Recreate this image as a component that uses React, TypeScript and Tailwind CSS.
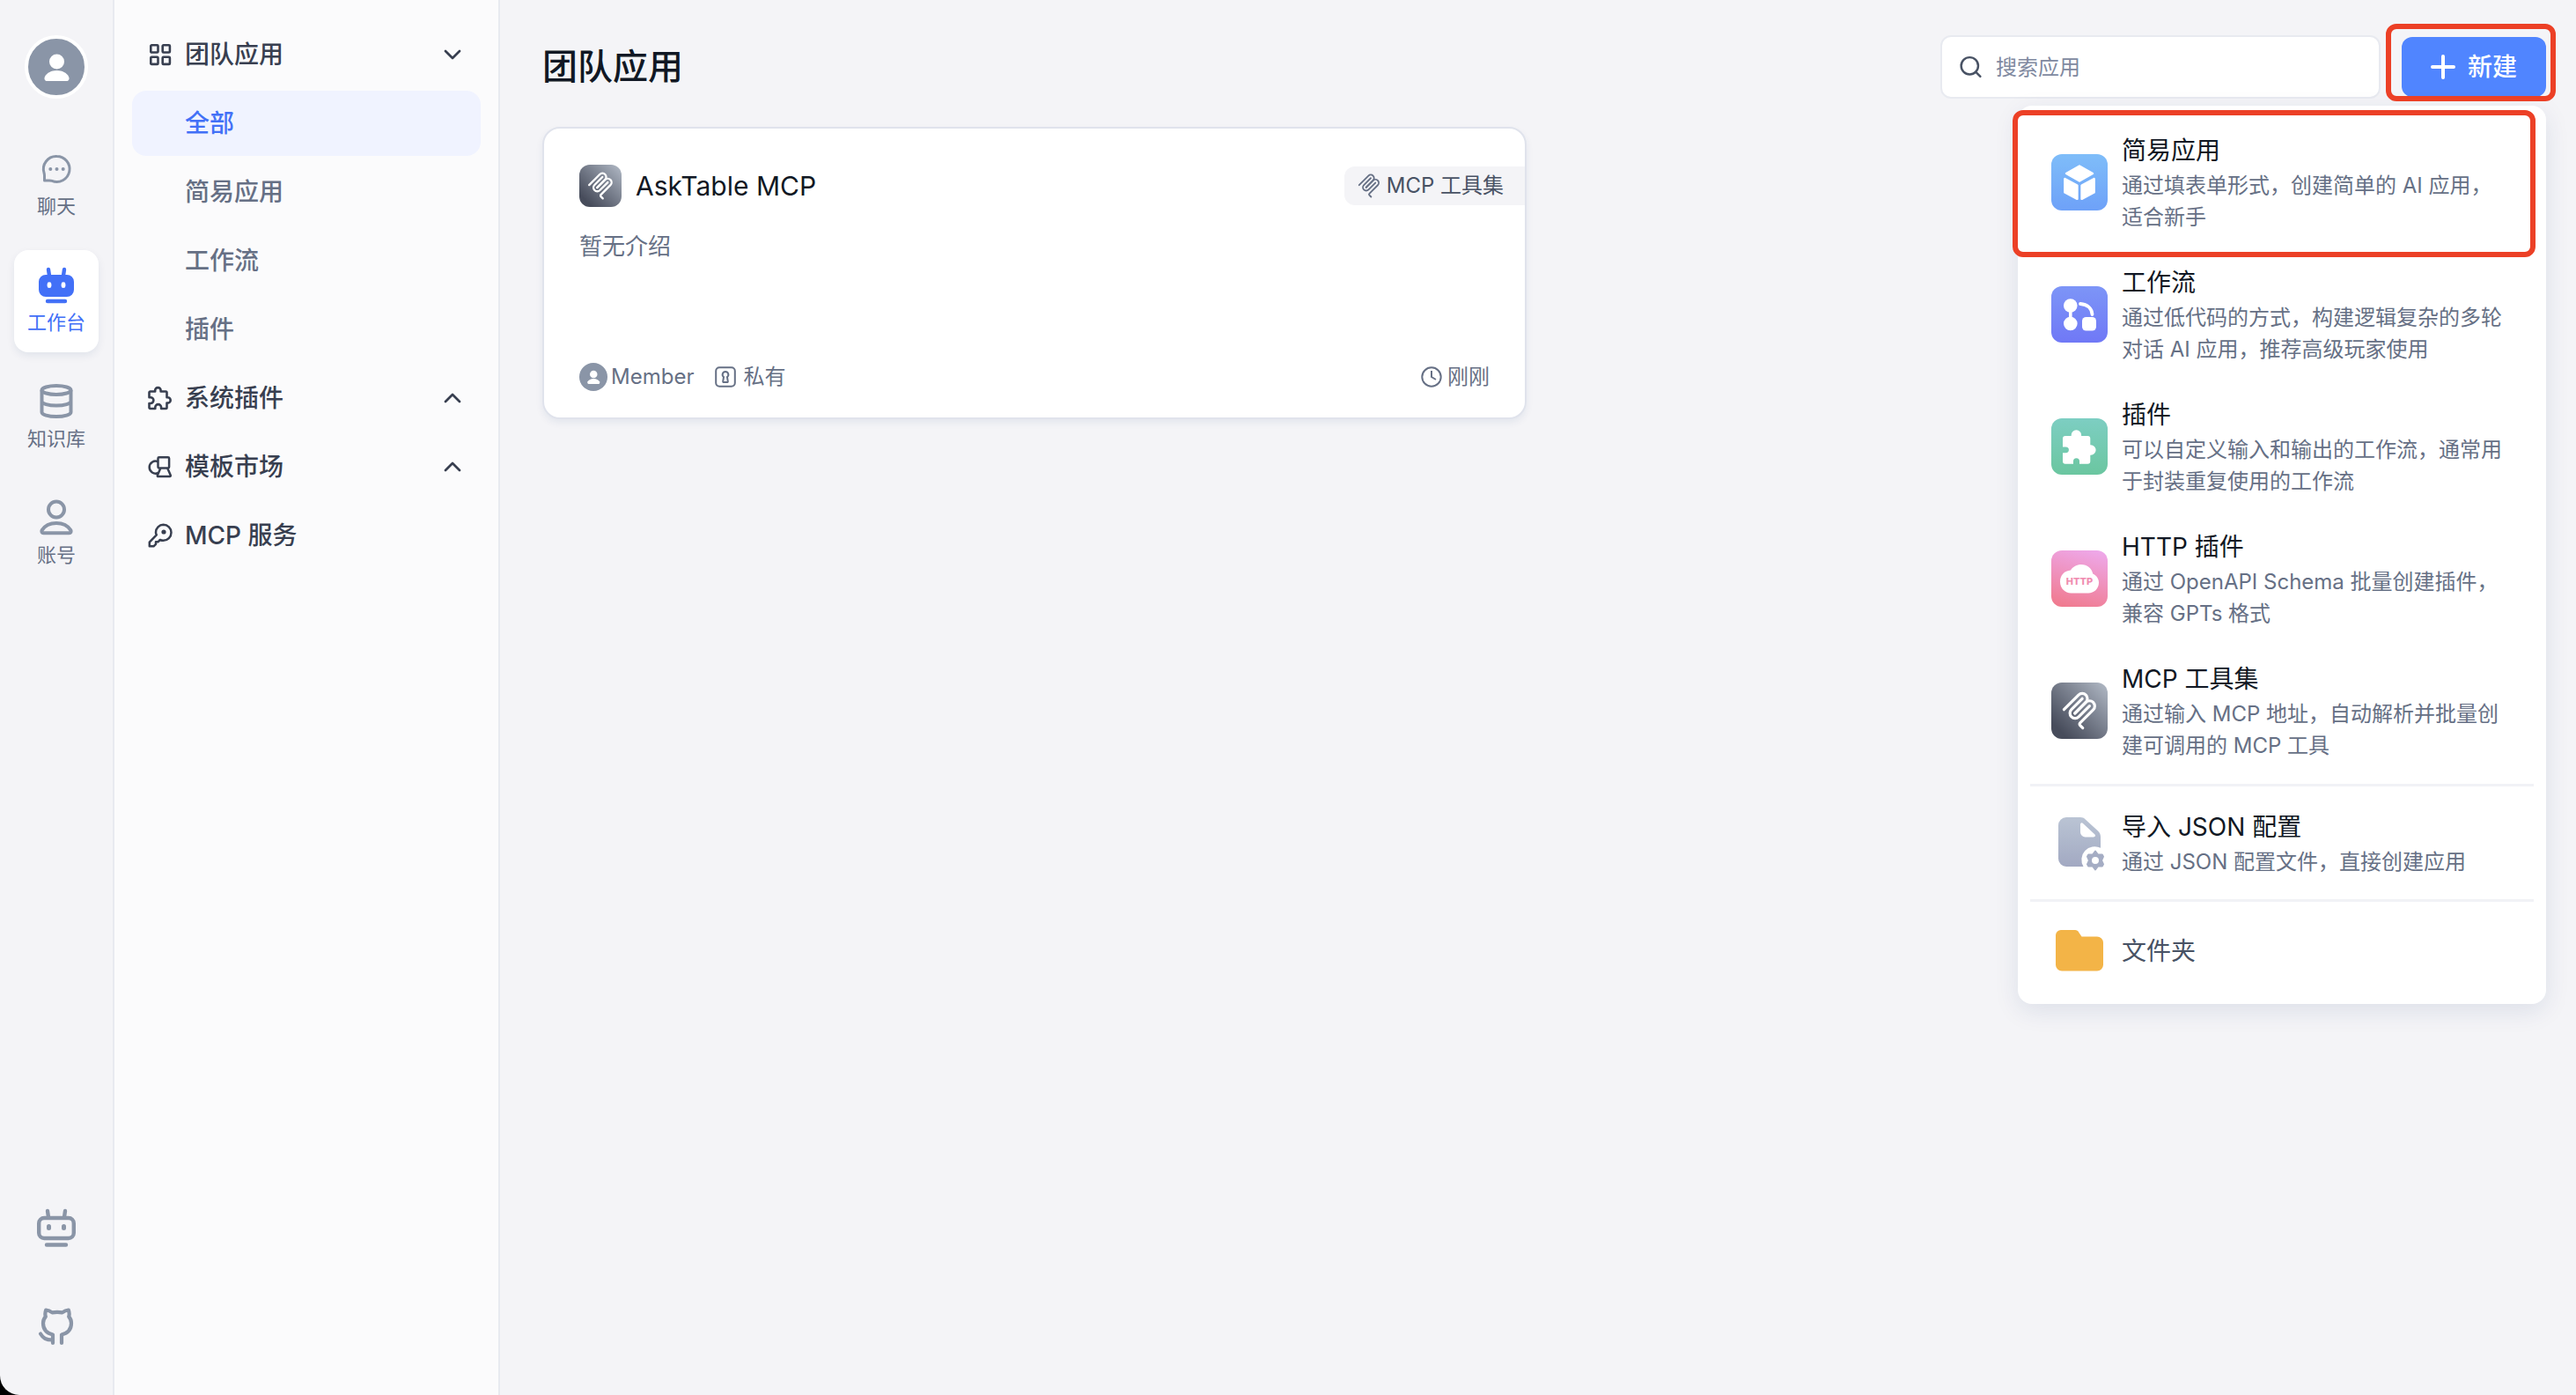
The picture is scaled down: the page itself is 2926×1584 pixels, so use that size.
import React from 'react';
import { ChevronDown, ChevronUp, Search } from 'lucide-react';

type IconProps = { className?: string };

const McpIcon = ({ className, width = 12 }: IconProps & { width?: number }) => (
  <svg viewBox="0 0 180 180" className={className} fill="none" stroke="currentColor" strokeWidth={width} strokeLinecap="round">
    <path d="M18 84.85L85.88 16.97C95.25 7.6 110.45 7.6 119.82 16.97C129.2 26.34 129.2 41.54 119.82 50.91L68.56 102.18" />
    <path d="M69.27 101.47L119.82 50.91C129.2 41.54 144.39 41.54 153.77 50.91L154.12 51.27C163.49 60.64 163.49 75.83 154.12 85.21L92.72 146.6C89.6 149.72 89.6 154.79 92.72 157.91L105.33 170.52" />
    <path d="M102.85 33.94L52.65 84.15C43.28 93.52 43.28 108.71 52.65 118.09C62.02 127.46 77.22 127.46 86.59 118.09L136.79 67.88" />
  </svg>
);

const ChatIcon = () => (
  <svg viewBox="0 0 48 48" className="size-12" fill="none" stroke="currentColor" strokeWidth="3" strokeLinejoin="round">
    <path d="M24.500 9.500a14.500 14.500 0 1 1-5.500 27.900c-1-.4-2-.4-3-.4h-5.500v-5.500c0-1-.1-2-.4-3A14.500 14.500 0 0 1 24.500 9.500z" />
    <g fill="currentColor" stroke="none">
      <circle cx="17.300" cy="24" r="2" />
      <circle cx="24.500" cy="24" r="2" />
      <circle cx="31.700" cy="24" r="2" />
    </g>
  </svg>
);

const BotFilledIcon = () => (
  <svg viewBox="0 0 48 48" className="size-12">
    <path d="M15 6l1 7M33 6l-1 7M14 42h20" stroke="currentColor" strokeWidth="4.400" strokeLinecap="round" />
    <path fill="currentColor" fillRule="evenodd" d="M12 12h24a8 8 0 0 1 8 8v9a8 8 0 0 1-8 8H12a8 8 0 0 1-8-8v-9a8 8 0 0 1 8-8zm4 8.300a2.400 2.400 0 0 0-2.400 2.400v2a2.400 2.400 0 0 0 4.800 0v-2a2.400 2.400 0 0 0-2.400-2.400zm16 0a2.400 2.400 0 0 0-2.400 2.400v2a2.400 2.400 0 0 0 4.800 0v-2a2.400 2.400 0 0 0-2.400-2.400z" />
  </svg>
);

const BotIcon = () => (
  <svg viewBox="0 0 44 44" className="size-11" fill="none" stroke="currentColor" strokeWidth="4.400" strokeLinecap="round">
    <rect x="2.200" y="11" width="39.600" height="23" rx="6" />
    <path d="M12 3l1 7M32 3l-1 7M11 41.500h22" />
    <path d="M13.500 20.500v2M30.500 20.500v2" strokeWidth="5" />
  </svg>
);

const DatabaseIcon = () => (
  <svg viewBox="0 0 48 48" className="size-12" fill="none" stroke="currentColor" strokeWidth="4">
    <ellipse cx="24" cy="11" rx="16.500" ry="5" />
    <path d="M7.500 11v25c0 2.800 7.400 5 16.500 5s16.500-2.200 16.500-5V11M7.500 23.500c0 2.800 7.400 5 16.500 5s16.500-2.200 16.500-5" />
  </svg>
);

const UserIcon = () => (
  <svg viewBox="0 0 48 48" className="size-12" fill="none" stroke="currentColor" strokeWidth="4" strokeLinejoin="round">
    <circle cx="24" cy="14.500" r="9" />
    <path d="M24 30c7.500 0 13.500 3.500 16.400 8.100.8 1.600 0 3.100-1.800 3.100H9.400c-1.800 0-2.600-1.500-1.800-3.100C10.500 33.500 16.500 30 24 30z" />
  </svg>
);

const GithubIcon = () => (
  <svg viewBox="0 0 44 44" className="size-11" fill="none" stroke="currentColor" strokeWidth="4.200" strokeLinecap="round" strokeLinejoin="round">
    <path d="M18 41V31.500c-6-1.500-11-5.500-11-13 0-3.500 1-5.500 2.800-7.500-.8-2.500-.5-5 .4-7.500 2.800.3 5 1.400 7.100 2.900 4-.8 7.400-.8 11.400 0 2.100-1.500 4.300-2.600 7.100-2.900.9 2.500 1.200 5 .4 7.500 1.800 2 2.800 4 2.800 7.500 0 7.500-5 11.500-11 13V41" />
    <path d="M4 30.500c3 5 6 7 13.500 7" />
  </svg>
);

const PersonIcon = ({ className }: IconProps) => (
  <svg viewBox="0 0 64 64" className={className} fill="currentColor">
    <circle cx="32.500" cy="26" r="8.500" />
    <path d="M32.500 36c6.500 0 11 2.800 13.400 6.700 1.300 2.400.5 5.300-2.200 5.300H21.300c-2.700 0-3.500-2.900-2.200-5.300C21.500 38.800 26 36 32.500 36z" />
  </svg>
);

const GridIcon = () => (
  <svg viewBox="0 0 28 28" className="size-7" fill="none" stroke="currentColor" strokeWidth="2.600">
    <rect x="3.300" y="3.300" width="8.200" height="8.200" rx="1" />
    <rect x="16.700" y="3.300" width="8.200" height="8.200" rx="1" />
    <rect x="3.300" y="16.700" width="8.200" height="8.200" rx="1" />
    <rect x="16.700" y="16.700" width="8.200" height="8.200" rx="1" />
  </svg>
);

const PuzzleIcon = () => (
  <svg viewBox="0 0 28 28" className="size-7" fill="none" stroke="currentColor" strokeWidth="2.600" strokeLinejoin="round">
    <path d="M8.200 6.500V5.300a3.200 3.200 0 0 1 6.400 0v1.200h5.700a1.200 1.200 0 0 1 1.200 1.200v5.500h1a3.200 3.200 0 0 1 0 6.400h-1v5.200a1.200 1.200 0 0 1-1.200 1.200h-5.200v-1.500a3.400 3.400 0 0 0-6.800 0v1.500H2.700a1.200 1.200 0 0 1-1.200-1.200V20h1.500a3.400 3.400 0 0 0 0-6.800H1.500V7.700a1.200 1.200 0 0 1 1.200-1.200z" />
  </svg>
);

const MarketIcon = () => (
  <svg viewBox="0 0 28 28" className="size-7" fill="none" stroke="currentColor" strokeWidth="2.500" strokeLinejoin="round">
    <rect x="11.500" y="3.200" width="12.600" height="12.300" rx="1.200" />
    <path d="M11.500 8.200a7 7 0 1 0 0 12.800M14.300 15.700l-3.400 7.800c-.4 1 .1 1.500 1 1.500h12.800c1 0 1.400-.6 1-1.500l-3.400-7.800" />
  </svg>
);

const KeyIcon = () => (
  <svg viewBox="0 0 28 28" className="size-7" fill="none" stroke="currentColor" strokeWidth="2.500" strokeLinejoin="round">
    <path d="M17.500 1.800a9 9 0 0 1 0 18c-1.300 0-2.600-.3-3.700-.8l-2.300 2.300H9v2.500L6.500 26.300H1.800v-4.600l8-8.300c-.5-1-.8-1.800-.8-3a8.800 8.800 0 0 1 8.500-8.600z" />
    <circle cx="18" cy="10" r="2.600" fill="currentColor" stroke="none" />
  </svg>
);

const LockIcon = () => (
  <svg viewBox="0 0 24 24" className="size-6" fill="none" stroke="currentColor" strokeWidth="2">
    <rect x="1.200" y="1.200" width="21.600" height="21.600" rx="4" />
    <path d="M12 6a3.400 3.400 0 0 1 2 6.100l.8 5c.1.500-.3.900-.8.900h-4c-.5 0-.9-.4-.8-.9l.8-5A3.400 3.400 0 0 1 12 6z" />
  </svg>
);

const ClockIcon = () => (
  <svg viewBox="0 0 24 24" className="size-6" fill="none" stroke="currentColor" strokeWidth="2">
    <circle cx="12" cy="12" r="10.700" />
    <path d="M12 5v7l5 3" />
  </svg>
);

const SimpleAppIcon = () => (
  <svg viewBox="0 0 64 64" className="size-full" fill="white" stroke="white" strokeWidth="2.500" strokeLinejoin="round">
    <path d="M32 13.500L17 22l15 8.500L47 22z" />
    <path d="M15.400 28v15.500l14 7.300V35.500zM48.600 28v15.500l-14 7.300V35.500z" />
  </svg>
);

const WorkflowIcon = () => (
  <svg viewBox="0 0 64 64" className="size-full" fill="white">
    <circle cx="21.800" cy="22" r="7.800" />
    <circle cx="21.800" cy="42.500" r="7.800" />
    <rect x="35" y="35" width="16" height="15.500" rx="4.500" />
    <path d="M21.800 26v14" stroke="white" strokeWidth="3.600" />
    <path d="M33 20C41 20.500 46 25 46.500 32" fill="none" stroke="white" strokeWidth="3.800" strokeLinecap="round" />
  </svg>
);

const PluginIcon = () => (
  <svg viewBox="0 0 64 64" className="size-full" fill="white">
    <path d="M22.700 20v-1a5.700 5.700 0 0 1 11.400 0v1h7.200a3 3 0 0 1 3 3v7.300h.6a5.700 5.700 0 0 1 0 11.400h-.6v7a3 3 0 0 1-3 3H32v-3a3.500 3.500 0 0 0-7 0v3h-9a3 3 0 0 1-3-3v-9.500h3.500a3.400 3.400 0 0 0 0-6.800H13V23a3 3 0 0 1 3-3z" />
  </svg>
);

const HttpIcon = () => (
  <svg viewBox="0 0 64 64" className="size-full">
    <path fill="white" d="M22 22.500C24.500 18.500 29 16 34 16c7 0 12 4.500 13.200 10.500C51.300 28.500 54 32 54 36.500 54 43.500 48.500 48.500 42 48.500H22.500C15.500 48.500 10 43 10 35.500c0-7.500 5-12.500 12-13z" />
    <text x="32" y="39" textAnchor="middle" fontFamily="Inter, sans-serif" fontWeight="800" fontSize="11" fill="#f08bb0">HTTP</text>
  </svg>
);

const JsonIcon = () => (
  <svg viewBox="0 0 64 64" className="size-16">
    <defs>
      <linearGradient id="json-fill" x1="0" y1="0" x2="0" y2="1">
        <stop offset="0" stopColor="#bac4d4" />
        <stop offset="1" stopColor="#a2a9c2" />
      </linearGradient>
    </defs>
    <path fill="url(#json-fill)" d="M17 3h16c2.200 0 4.200.8 5.800 2.400l14.200 13.200c2 1.800 3 4.200 3 6.900V37.800A15 15 0 0 0 36.500 59H17a9 9 0 0 1-9-9V12a9 9 0 0 1 9-9z" />
    <path fill="white" d="M33 11.500c0-2 1.600-2.800 3-1.500l13.200 12.300c1.500 1.500.8 3.100-1.200 3.100H38.500A5.500 5.500 0 0 1 33 20z" />
    <path
      fill="#a5adc4"
      stroke="#a5adc4"
      strokeWidth="2"
      strokeLinejoin="round"
      fillRule="evenodd"
      d="M50 41.500l3 4 4.800.1 1.200 2.100-2 4.300 2 4.300-1.200 2.100-4.800.1-3 4-3-4-4.800-.1-1.200-2.100 2-4.300-2-4.300 1.200-2.100 4.800-.1zm0 5.500a5 5 0 1 0 0 10 5 5 0 0 0 0-10z"
    />
  </svg>
);

const FolderIcon = () => (
  <svg viewBox="0 0 64 64" className="size-16" fill="#f3b447">
    <path d="M11 8h16c2 0 3.500 1 4.300 2.800L34.500 15.500H52a7 7 0 0 1 7 7v25a7 7 0 0 1-7 7H12a7 7 0 0 1-7-7V14a6 6 0 0 1 6-6z" />
  </svg>
);

const navItems = [
  { label: '聊天', icon: <ChatIcon /> },
  { label: '工作台', icon: <BotFilledIcon />, active: true },
  { label: '知识库', icon: <DatabaseIcon /> },
  { label: '账号', icon: <UserIcon /> },
];

const createItems = [
  {
    title: '简易应用',
    desc: '通过填表单形式，创建简单的 AI 应用，适合新手',
    icon: <SimpleAppIcon />,
    bg: 'bg-linear-to-b from-[#7fbdf9] to-[#6ea1f8]',
  },
  {
    title: '工作流',
    desc: '通过低代码的方式，构建逻辑复杂的多轮对话 AI 应用，推荐高级玩家使用',
    icon: <WorkflowIcon />,
    bg: 'bg-linear-to-b from-[#7d95f7] to-[#7078f6]',
  },
  {
    title: '插件',
    desc: '可以自定义输入和输出的工作流，通常用于封装重复使用的工作流',
    icon: <PluginIcon />,
    bg: 'bg-linear-to-b from-[#7dcec2] to-[#6bc6a0]',
  },
  {
    title: 'HTTP 插件',
    desc: '通过 OpenAPI Schema 批量创建插件，兼容 GPTs 格式',
    icon: <HttpIcon />,
    bg: 'bg-linear-[195deg] from-[#eeaaee] to-[#f0788a]',
  },
  {
    title: 'MCP 工具集',
    desc: '通过输入 MCP 地址，自动解析并批量创建可调用的 MCP 工具',
    icon: <McpIcon className="size-11 text-white" width={13} />,
    bg: 'bg-linear-to-bl from-[#b3bbc7] to-[#474c5b] to-85%',
  },
];

const NavRail = () => (
  <nav className="flex w-[130px] shrink-0 flex-col items-center border-r-2 border-[#e8eaf0] pt-10 pb-14">
    <button aria-label="个人中心" className="flex size-[72px] items-center justify-center rounded-full border-4 border-white bg-[#8a95a7] text-white">
      <PersonIcon className="size-16" />
    </button>
    <div className="mt-10 flex flex-col gap-4">
      {navItems.map((item) => (
        <button
          key={item.label}
          className={`flex h-[116px] w-24 flex-col items-center justify-center gap-1 rounded-2xl pb-1 ${
            item.active ? 'bg-white text-[#4270f7] shadow-[0_4px_10px_rgba(19,51,107,0.08)]' : 'text-[#8a95a7]'
          }`}
        >
          {item.icon}
          <span className={`text-[22px] leading-7 ${item.active ? 'text-[#4270f7]' : 'text-[#667085]'}`}>{item.label}</span>
        </button>
      ))}
    </div>
    <div className="mt-auto flex flex-col gap-[68px] text-[#8a95a7]">
      <button aria-label="助手">
        <BotIcon />
      </button>
      <a href="#github" aria-label="GitHub">
        <GithubIcon />
      </a>
    </div>
  </nav>
);

const MenuGroup = ({ icon, label, open }: { icon: React.ReactNode; label: string; open?: boolean }) => (
  <button className="flex h-[74px] items-center gap-3.5 rounded-2xl pr-4 pl-[18px] text-left font-medium text-[#383f50]">
    {icon}
    <span className="flex-1">{label}</span>
    {open === true && <ChevronDown className="size-8" />}
    {open === false && <ChevronUp className="size-8" />}
  </button>
);

const MenuLink = ({ label, active }: { label: string; active?: boolean }) => (
  <a
    href="#apps"
    className={`flex h-[74px] items-center rounded-2xl pl-[60px] font-medium ${active ? 'bg-[#f0f3ff] text-[#4270f7]' : 'text-[#667085]'}`}
  >
    {label}
  </a>
);

const SideMenu = () => (
  <aside className="flex w-[438px] shrink-0 flex-col gap-1 border-r-2 border-[#e8eaf0] bg-[#fbfbfc] px-5 pt-[25px] text-[28px]">
    <MenuGroup icon={<GridIcon />} label="团队应用" open />
    <MenuLink label="全部" active />
    <MenuLink label="简易应用" />
    <MenuLink label="工作流" />
    <MenuLink label="插件" />
    <MenuGroup icon={<PuzzleIcon />} label="系统插件" open={false} />
    <MenuGroup icon={<MarketIcon />} label="模板市场" open={false} />
    <MenuGroup icon={<KeyIcon />} label="MCP 服务" />
  </aside>
);

const CreateMenu = () => (
  <div className="absolute top-[78px] right-0 z-10 w-[600px] rounded-2xl bg-white px-3.5 py-3 shadow-[0_8px_28px_rgba(19,51,107,0.1)]">
    {createItems.map((item) => (
      <button key={item.title} className="flex w-full items-center gap-4 px-6 py-[17px] text-left">
        <span className={`flex size-16 shrink-0 items-center justify-center rounded-xl ${item.bg}`}>{item.icon}</span>
        <span className="flex-1">
          <span className="block text-[28px] leading-11 text-[#111824]">{item.title}</span>
          <span className="block text-2xl leading-9 text-[#667085]">{item.desc}</span>
        </span>
      </button>
    ))}
    <hr className="my-2 h-[3px] border-0 bg-[#f1f2f6]" />
    <button className="flex w-full items-center gap-4 px-6 py-4 text-left">
      <JsonIcon />
      <span className="flex-1">
        <span className="block text-[28px] leading-11 text-[#111824]">导入 JSON 配置</span>
        <span className="block text-2xl leading-9 text-[#667085]">通过 JSON 配置文件，直接创建应用</span>
      </span>
    </button>
    <hr className="my-2 h-[3px] border-0 bg-[#f1f2f6]" />
    <button className="flex w-full items-center gap-4 px-6 py-4 text-left text-[28px] text-[#485264]">
      <FolderIcon />
      文件夹
    </button>
    <div className="pointer-events-none absolute top-[5px] -left-1.5 h-[167px] w-[594px] rounded-xl border-6 border-[#ec4026]" />
  </div>
);

const AppCard = () => (
  <article className="flex h-[332px] flex-col overflow-hidden rounded-[20px] border-2 border-[#e0e3ec] bg-white pt-10 pb-[30px] pl-10 shadow-[0_4px_8px_rgba(19,51,107,0.07)]">
    <div className="flex items-center">
      <span className="flex size-12 items-center justify-center rounded-xl bg-linear-to-bl from-[#b3bbc7] to-[#474c5b] to-85%">
        <McpIcon className="size-8 text-white" width={13} />
      </span>
      <h2 className="ml-4 flex-1 text-[30px] leading-[50px] text-[#111824]">AskTable MCP</h2>
      <span className="flex h-11 items-center gap-1.5 rounded-l-xl bg-[#f4f4f7] pr-6 pl-3.5 text-2xl text-[#485264]">
        <McpIcon className="size-7 text-[#667085]" />
        MCP 工具集
      </span>
    </div>
    <p className="mt-6 text-[26px] leading-10 text-[#667085]">暂无介绍</p>
    <div className="mt-auto flex items-center pr-10 text-2xl leading-8 text-[#667085]">
      <span className="flex size-8 items-center justify-center rounded-full bg-[#8a95a7] text-white">
        <PersonIcon className="size-8" />
      </span>
      <span className="ml-1">Member</span>
      <span className="ml-6 flex items-center gap-2">
        <LockIcon />
        私有
      </span>
      <span className="ml-auto flex items-center gap-1.5">
        <ClockIcon />
        刚刚
      </span>
    </div>
  </article>
);

export default function App() {
  return (
    <div className="min-h-screen bg-black font-['Inter','Noto_Sans_CJK_SC',sans-serif]">
      <div className="flex min-h-screen rounded-bl-[22px] bg-[#f4f4f7]">
        <NavRail />
        <SideMenu />
        <main className="flex-1 pt-10 pr-[34px] pl-12">
          <header className="flex items-center justify-between">
            <h1 className="text-[40px] leading-[72px] font-medium text-[#111824]">团队应用</h1>
            <div className="flex items-center gap-6">
              <label className="flex h-[72px] w-[500px] items-center gap-3.5 rounded-xl border-2 border-[#e8eaf0] bg-white px-[18px]">
                <Search className="size-8 text-[#485264]" />
                <input type="text" aria-label="搜索应用" placeholder="搜索应用" className="w-full pt-0.5 text-2xl outline-none placeholder:text-[#8089a0]" />
              </label>
              <div className="relative">
                <button className="flex h-[68px] w-[164px] items-center justify-center gap-3.5 rounded-xl bg-[#5085ff] text-[28px] font-medium text-white">
                  <svg viewBox="0 0 28 28" className="size-7" stroke="currentColor" strokeWidth="4" strokeLinecap="round">
                    <path d="M14 2v24M2 14h24" />
                  </svg>
                  新建
                </button>
                <div className="pointer-events-none absolute -top-[15px] -right-[11px] -bottom-[5px] -left-[18px] z-20 rounded-xl border-6 border-[#ec4026]" />
                <CreateMenu />
              </div>
            </div>
          </header>
          <section className="mt-8 grid grid-cols-2 gap-10">
            <AppCard />
          </section>
        </main>
      </div>
    </div>
  );
}
